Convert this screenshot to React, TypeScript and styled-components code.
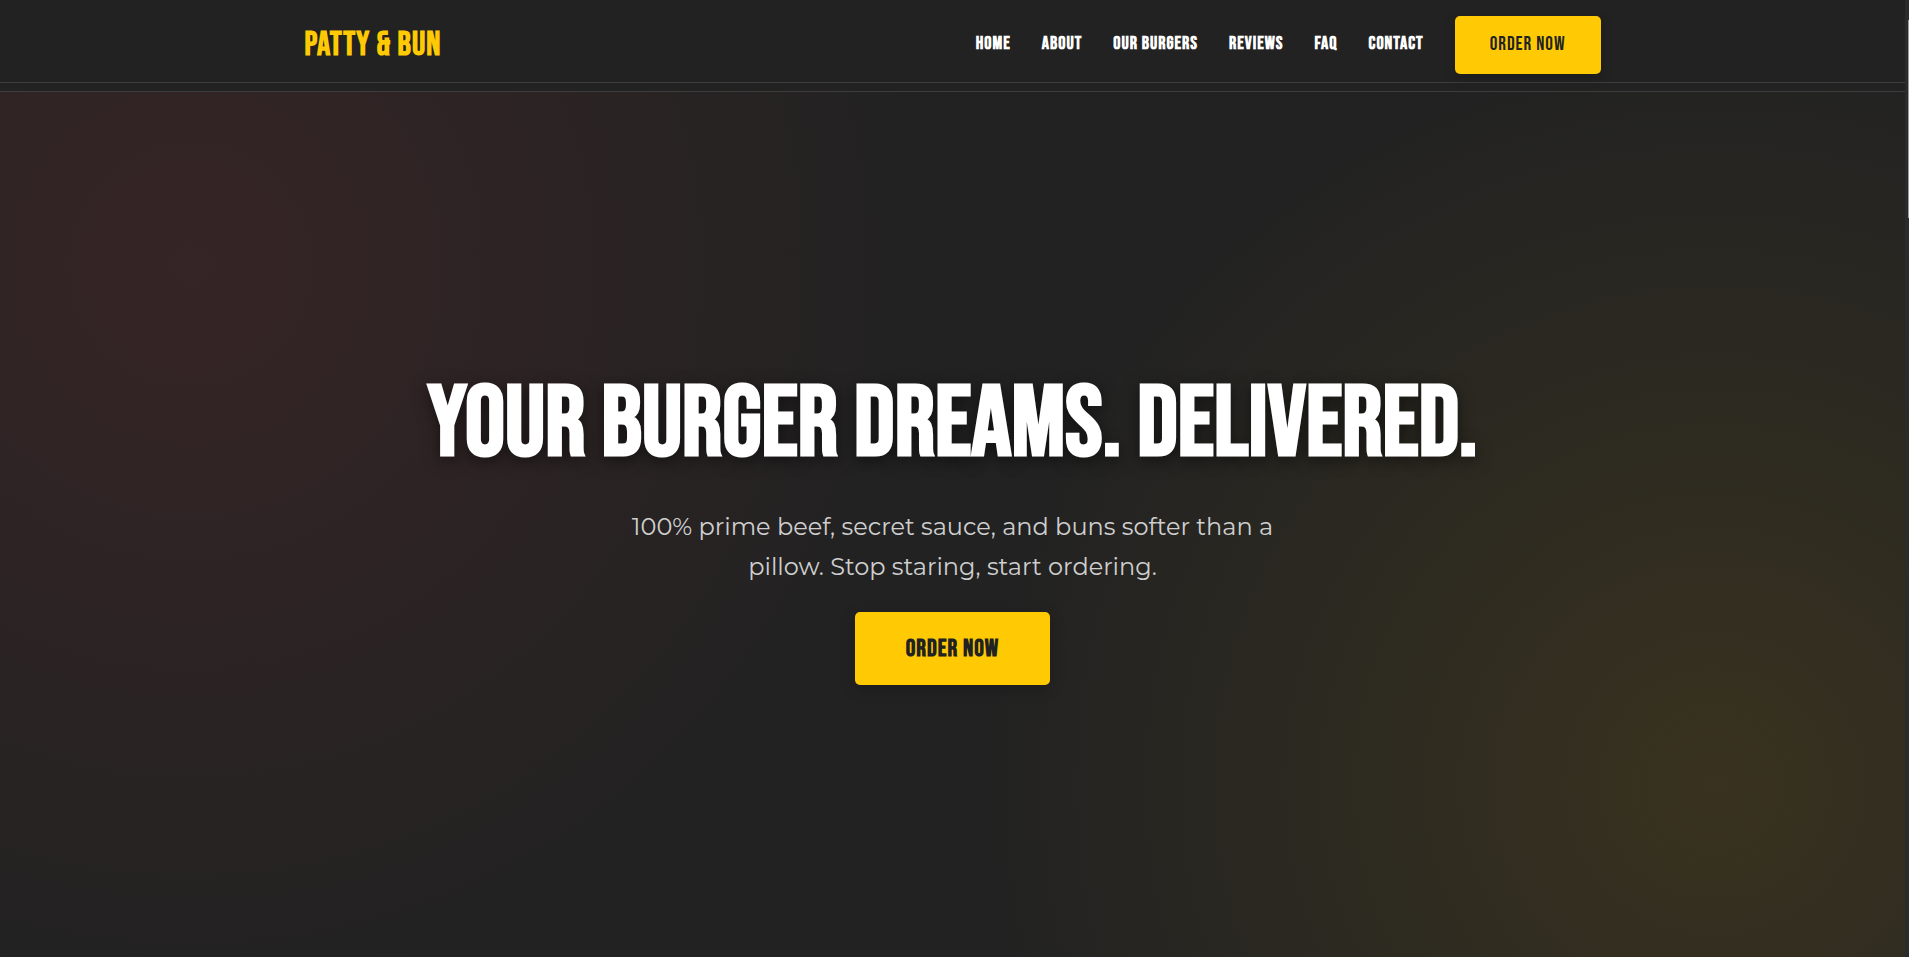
import React from "react";
import styled, { createGlobalStyle, css } from "styled-components";

const colors = {
  ink: "#222222",
  line: "#3d3d3d",
  mustard: "#ffca03",
  white: "#ffffff",
  muted: "#cfcfcf",
};

const display = `"Bebas Neue", "Open Sans Condensed", "Roboto Condensed", sans-serif`;
const body = `"Montserrat", "Inter", sans-serif`;

const GlobalStyle = createGlobalStyle`
  *, *::before, *::after { box-sizing: border-box; }
  body {
    margin: 0;
    background: ${colors.ink};
    color: ${colors.white};
    font-family: ${body};
  }
`;

const Shell = styled.div`
  display: flex;
  min-height: 100vh;
`;

const Page = styled.div`
  display: flex;
  flex: 1;
  flex-direction: column;
  min-width: 0;
`;

const Header = styled.header`
  padding: 8px 0;
  background: ${colors.ink};
  border-bottom: 1px solid ${colors.line};
`;

const HeaderBar = styled.div`
  padding: 8px 0;
  border-bottom: 1px solid ${colors.line};
`;

const Container = styled.div`
  display: flex;
  align-items: center;
  justify-content: space-between;
  max-width: 1360px;
  margin: 0 auto;
  padding: 0 32px;
`;

const Logo = styled.a`
  color: ${colors.mustard};
  font: 700 33px/40px ${display};
  letter-spacing: 1px;
  text-decoration: none;
`;

const Nav = styled.nav`
  display: flex;
  align-items: center;
  gap: 31px;
`;

const NavLink = styled.a`
  padding-bottom: 2px;
  color: ${colors.white};
  font: 700 18px/24px ${display};
  letter-spacing: 1px;
  text-decoration: none;
`;

const OrderButton = styled.button<{ $size: "small" | "large" }>`
  border: 0;
  border-radius: 5px;
  background: ${colors.mustard};
  color: ${colors.ink};
  letter-spacing: 1px;
  cursor: pointer;

  ${({ $size }) =>
    $size === "small"
      ? css`
          padding: 17px 35px;
          font: 400 19px/24px ${display};
          box-shadow: 0 4px 12px rgba(0, 0, 0, 0.2);
        `
      : css`
          padding: 23px 51px 22px;
          font: 700 24px/28px ${display};
          box-shadow: 0 4px 16px rgba(0, 0, 0, 0.2);
        `}
`;

const Hero = styled.main`
  display: flex;
  flex: 1;
  flex-direction: column;
  align-items: center;
  justify-content: center;
  padding: 32px;
  text-align: center;
  background:
    radial-gradient(circle at 10% 20%, rgba(230, 57, 70, 0.1) 0%, transparent 40%),
    radial-gradient(circle at 90% 80%, rgba(255, 190, 3, 0.1) 0%, transparent 40%),
    ${colors.ink};
`;

const Title = styled.h1`
  margin: 0 0 22px;
  font: 700 100px/120px ${display};
  text-shadow: 0 4px 16px rgba(0, 0, 0, 0.5);
`;

const Lead = styled.p`
  max-width: 700px;
  margin: 0 0 25px;
  color: ${colors.muted};
  font: 400 24px/40px ${body};
`;

const ScrollTrack = styled.div`
  display: flex;
  justify-content: flex-end;
  width: 4px;
  padding-top: 20px;
  background: #2b2b2b;
`;

const ScrollThumb = styled.div`
  width: 1px;
  height: 198px;
  background: #9b9b9b;
`;

const links = [
  { label: "HOME", href: "#home" },
  { label: "ABOUT", href: "#about" },
  { label: "OUR BURGERS", href: "#burgers" },
  { label: "REVIEWS", href: "#reviews" },
  { label: "FAQ", href: "#faq" },
  { label: "CONTACT", href: "#contact" },
];

export default function App() {
  return (
    <Shell>
      <GlobalStyle />
      <Page>
        <Header>
          <HeaderBar>
            <Container>
              <Logo href="#home">PATTY &amp; BUN</Logo>
              <Nav aria-label="Main">
                {links.map(({ label, href }) => (
                  <NavLink key={href} href={href}>
                    {label}
                  </NavLink>
                ))}
                <OrderButton type="button" $size="small">
                  ORDER NOW
                </OrderButton>
              </Nav>
            </Container>
          </HeaderBar>
        </Header>
        <Hero id="home">
          <Title>YOUR BURGER DREAMS. DELIVERED.</Title>
          <Lead>
            100% prime beef, secret sauce, and buns softer than a pillow. Stop staring, start
            ordering.
          </Lead>
          <OrderButton type="button" $size="large">
            ORDER NOW
          </OrderButton>
        </Hero>
      </Page>
      <ScrollTrack aria-hidden="true">
        <ScrollThumb />
      </ScrollTrack>
    </Shell>
  );
}
